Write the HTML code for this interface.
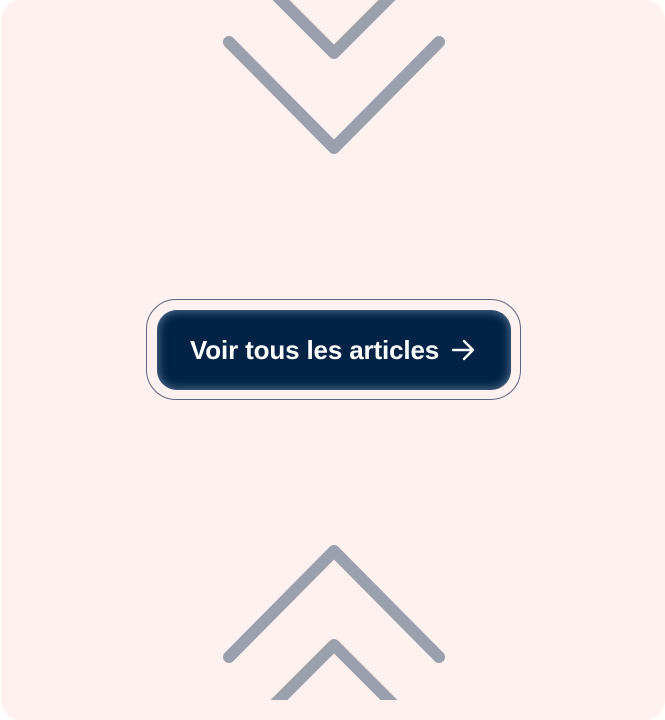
<!DOCTYPE html>
<html><head><style>
html,body{margin:0;padding:0;background:#fff;}
body{width:665px;height:700px;position:relative;overflow:hidden;font-family:"Liberation Sans",sans-serif;}
.card{position:absolute;left:1px;top:0;width:664px;height:720px;background:#fff1f0;border-radius:20px;}
svg.ch{position:absolute;left:0;top:0;}
.outer{position:absolute;left:146px;top:299px;width:373px;height:99px;border:1.6px solid #5b6780;border-radius:30px;}
.btn{position:absolute;left:157px;top:310px;width:354px;height:80px;background:#012345;border-radius:20px;box-shadow:inset 0 0 9px 2px rgba(140,160,190,.55);color:#fff;font-size:26px;font-weight:bold;letter-spacing:-0.15px;line-height:80px;}
.btn span{position:absolute;left:33px;top:0;}
.btn svg{position:absolute;left:294px;top:28px;}
</style></head><body>
<div class="card"></div>
<svg class="ch" width="665" height="700" fill="none" stroke="#9aa1ac" stroke-width="12" stroke-linecap="round" stroke-linejoin="round">
<polyline points="229,42 334,148 439,42"/>
<polyline points="270,-11 334,53 398,-11"/>
<polyline points="229,657 334,551 439,657"/>
<polyline points="270,709 334,645 398,709"/>
</svg>
<div class="outer"></div>
<div class="btn"><span>Voir tous les articles</span>
<svg width="26" height="24" viewBox="0 0 26 24" fill="none" stroke="#fff" stroke-width="2.4" stroke-linecap="round" stroke-linejoin="round"><path d="M2 12H22M13 3L22 12L13 21"/></svg>
</div>
</body></html>
